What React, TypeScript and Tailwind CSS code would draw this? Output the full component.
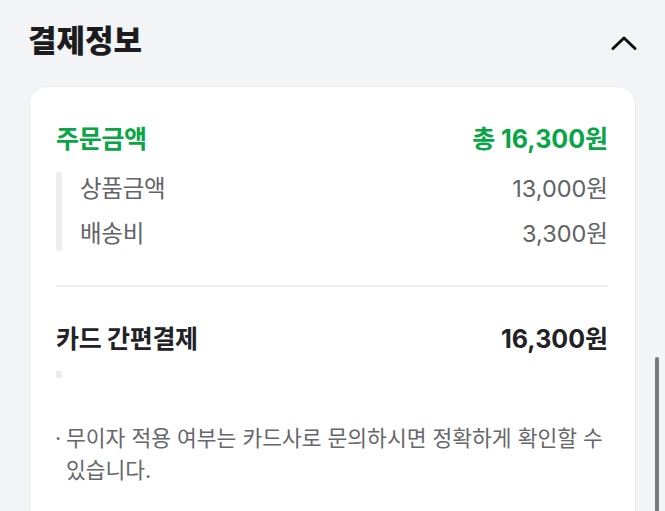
import React from "react";

export default function App() {
  return (
    <div
      className="relative w-[665px] h-[511px] overflow-hidden bg-[#f3f4f6]"
      style={{ fontFamily: 'Inter, "Noto Sans CJK KR", "Noto Sans", sans-serif' }}
    >
      <div className="px-[29px]">
        <div className="flex items-center justify-between pt-[18px]">
          <h2 className="text-[31px] leading-[46px] font-black text-[#1c1c1e] -ml-[1px]">
            결제정보
          </h2>
          <svg width="26" height="16" viewBox="0 0 26 16" className="mr-[-1px] mt-[3px]">
            <polyline
              points="2,13.5 13,3 24,13.5"
              fill="none"
              stroke="#111"
              strokeWidth="3"
              strokeLinecap="round"
              strokeLinejoin="round"
            />
          </svg>
        </div>

        <div className="mt-[22px] bg-white rounded-[18px] border border-[#ececef] pl-[26px] pr-[27px] pt-[34px] pb-[60px]">
          <div className="flex items-center justify-between leading-[36px] text-[25px] font-bold text-[#07a546]">
            <span className="tracking-[-0.3px]">주문금액</span>
            <span>총 16,300원</span>
          </div>

          <div className="mt-[15px] flex">
            <div className="w-[6px] bg-[#eeeef3]" />
            <div className="flex-1 pl-[18px] flex flex-col gap-[11px] text-[23.5px] leading-[34px] text-[#626267]">
              <div className="flex justify-between">
                <span className="tracking-[-0.3px]">상품금액</span>
                <span>13,000원</span>
              </div>
              <div className="flex justify-between">
                <span className="tracking-[-0.3px]">배송비</span>
                <span>3,300원</span>
              </div>
            </div>
          </div>

          <div className="mt-[34px] h-[2px] bg-[#f0f0f2]" />

          <div className="mt-[34px] flex items-center justify-between leading-[36px] text-[25px] font-bold text-[#222226]">
            <span className="tracking-[-0.3px]">카드 간편결제</span>
            <span>16,300원</span>
          </div>

          <div className="mt-[14px] w-[6px] h-[7px] bg-[#ededf0]" />

          <div className="mt-[44px] flex text-[21.5px] leading-[32px] text-[#66666b]">
            <span className="w-[11px] shrink-0 -ml-[1px]">·</span>
            <p>무이자 적용 여부는 카드사로 문의하시면 정확하게 확인할 수 있습니다.</p>
          </div>
        </div>
      </div>

      <div className="absolute left-[655px] top-[357px] w-[4px] h-[170px] rounded-full bg-[#7a7a7e]" />
    </div>
  );
}
